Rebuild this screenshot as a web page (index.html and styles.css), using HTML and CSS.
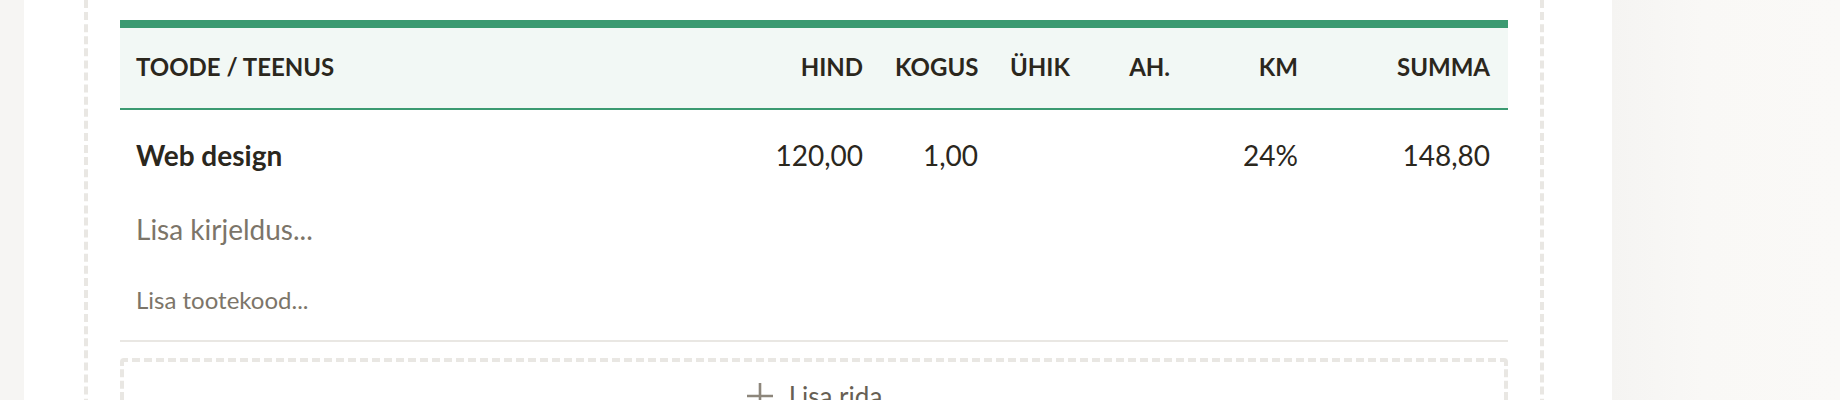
FILE: index.html
```html
<!DOCTYPE html>
<html lang="et">
<head>
<meta charset="utf-8">
<title>Arve read</title>
<link rel="stylesheet" href="styles.css">
</head>
<body>
<div class="app">
  <div class="gutter"></div>
  <main class="sheet">
    <div class="frame">
      <div class="table">
        <div class="thead">
          <div class="th">Toode / Teenus</div>
          <div class="th num">Hind</div>
          <div class="th num">Kogus</div>
          <div class="th">Ühik</div>
          <div class="th num">Ah.</div>
          <div class="th num">KM</div>
          <div class="th num last">Summa</div>
        </div>
        <div class="row">
          <div class="td product">
            <div class="name">Web design</div>
            <div class="desc">Lisa kirjeldus...</div>
            <div class="code">Lisa tootekood...</div>
          </div>
          <div class="td num">120,00</div>
          <div class="td num">1,00</div>
          <div class="td"></div>
          <div class="td num"></div>
          <div class="td num">24%</div>
          <div class="td num last">148,80</div>
        </div>
      </div>
      <button class="add-row" type="button">
        <svg class="plus" viewBox="0 0 28 28" width="28" height="28" aria-hidden="true">
          <path d="M14 1v26M1 14h26" stroke="currentColor" stroke-width="2.6" fill="none"/>
        </svg>
        <span>Lisa rida</span>
      </button>
    </div>
  </main>
  <aside class="side"></aside>
</div>
</body>
</html>
```
FILE: styles.css
```css
* { box-sizing: border-box; }
html, body { margin: 0; padding: 0; }
body {
  background: #f6f5f3;
  font-family: Lato, "Noto Sans", "Liberation Sans", sans-serif;
  color: #2b271d;
  overflow: hidden;
}
.app {
  display: flex;
  height: 400px;
  overflow: hidden;
}
.gutter {
  width: 24px;
  flex: none;
  background: #f6f5f3;
}
.sheet {
  width: 1588px;
  flex: none;
  background: #ffffff;
  padding: 0 68px 0 60px;
}
.frame {
  border-left: 4px dashed #e9e7e3;
  border-right: 4px dashed #e9e7e3;
  padding: 20px 32px 0;
  height: 600px;
}
.side {
  flex: 1;
  background: linear-gradient(to right, #f5f4f2 0, #f9f8f6 90px, #faf9f7 100%);
}
.table {
  border-top: 8px solid #3b9a71;
}
.thead, .row {
  display: grid;
  grid-template-columns: 1fr 120px 115px 96px 96px 128px 194px;
}
.thead {
  background: #f2f8f5;
  border-bottom: 2px solid #3b9a71;
  padding: 24px 0 26px;
}
.th {
  font-size: 24px;
  line-height: 30px;
  font-weight: 700;
  text-transform: uppercase;
  padding: 0 16px;
  color: #2b271d;
  white-space: nowrap;
}
.num { text-align: right; }
.last { padding-right: 18px; }
.row {
  padding: 28px 0 25px;
  border-bottom: 2px solid #e9e7e3;
}
.td {
  padding: 0 16px;
  font-size: 28px;
  line-height: 34px;
  color: #2b271d;
  white-space: nowrap;
}
.td.last { padding-right: 18px; }
.name {
  font-weight: 700;
  font-size: 28px;
  line-height: 34px;
}
.desc {
  margin-top: 40px;
  font-size: 28px;
  line-height: 34px;
  color: #7c7569;
}
.code {
  margin-top: 39px;
  font-size: 24px;
  line-height: 30px;
  color: #7c7569;
}
.add-row {
  display: flex;
  width: 100%;
  justify-content: center;
  align-items: center;
  gap: 15px;
  margin-top: 16px;
  padding: 18px 0;
  border: 4px dashed #e9e7e3;
  border-radius: 4px;
  background: #fff;
  font-family: inherit;
  font-size: 26px;
  line-height: 32px;
  color: #675f54;
}
.plus {
  color: #8d867b;
  display: block;
}
```
